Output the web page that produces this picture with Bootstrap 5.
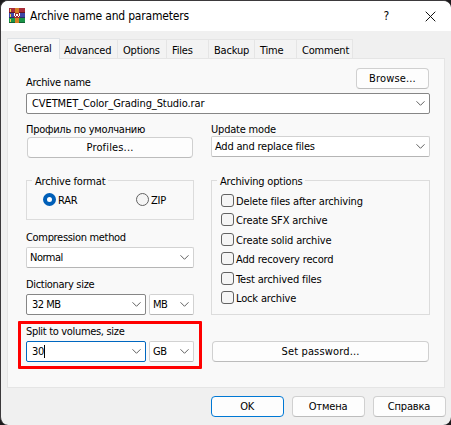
<!DOCTYPE html>
<html lang="en">
<head>
<meta charset="utf-8">
<meta name="viewport" content="width=device-width, initial-scale=1">
<title>Archive name and parameters</title>
<link href="https://cdn.jsdelivr.net/npm/bootstrap@5.3.0/dist/css/bootstrap.min.css" rel="stylesheet">
<style>
html,body{height:100%;overflow:hidden}
body{background:#1c1a1c;font:11px/15px "DejaVu Sans Condensed","DejaVu Sans",sans-serif;font-stretch:condensed;color:#000;letter-spacing:-.2px;white-space:nowrap}
.dialog-win{width:451px;height:425px;background:#f0f0f0;border:1px solid #3b393b;border-right:0;border-bottom:0;border-radius:8px;overflow:hidden}
.title-strip{height:30px;background:#fff;padding:0 15px 0 8px}
.title-strip .caption{font-size:12px;margin-left:5px;letter-spacing:-.2px}
.nav-tabs{--bs-nav-tabs-border-width:0;height:27px;padding:7px 0 0 6px;align-items:flex-end;border:0;flex-wrap:nowrap;position:relative;z-index:1}
.nav-tabs .nav-link{height:19px;padding:3px 0 0 5px;border:1px solid #e5e5e5;border-bottom:0;border-left:0;border-radius:0;background:#f3f3f3;color:#000;margin:0}
.nav-tabs .nav-link.w-adv{padding-left:4px}
.nav-tabs .nav-link.active{height:21px;padding:2px 0 0 6px;border-left:1px solid #e5e5e5;background:#f9f9f9;color:#000;margin-bottom:-1px}
.w-gen{width:53px}.w-adv{width:58px}.w-opt{width:49px}.w-fil{width:42px}.w-bak{width:46px}.w-tim{width:42px}.w-com{width:56px}
.pane{margin-left:6px;width:438px;height:330px;background:#f9f9f9;border:1px solid #e5e5e5;padding:9px 14px 0 18px}
.head-row{height:25px;padding:0 1px 0 0}
.head-row label{margin-top:7px;letter-spacing:-.3px}
.btn{--bs-btn-font-size:11px;--bs-btn-line-height:15px;height:21px;padding:0;background:#fdfdfd;border:1px solid #d0d0d0;border-bottom-color:#bcbcbc;border-radius:4px;color:#000;letter-spacing:.15px}
.btn.cyr{letter-spacing:-.15px;padding-right:1px}
.btn.main{border-color:#0078d4;letter-spacing:-.3px;padding-right:1px}
.w-std{width:73px}
.combo{height:21px;background:#fff;border:1px solid #d2d2d2;border-bottom-color:#b5b5b5;border-radius:2px;padding:0 4px 0 3px}
.combo.edit{border-color:#868686;padding-left:5px}
.combo.focus{border-color:#0067c0}
.chev{width:9px;height:5px;fill:none;stroke:#606060;stroke-width:1}
.file-name{letter-spacing:-.1px}
.tight{letter-spacing:-.5px}
.col-l{width:168px}.col-r{width:219px}
.size{width:120px}.unit{width:45px}
.group{border:1px solid #dcdcdc;position:relative}
.group>legend{position:absolute;top:-7px;left:5px;width:auto;margin:0;padding:0 3px;background:#f9f9f9;font-size:11px;line-height:15px;float:none}
.g-format{height:40px;margin-top:22px;padding:12px 0 0 16px}
.g-opts{height:135px;margin-top:23px;padding:13px 0 0 9px}
.form-check-input{width:13px;height:13px;margin:0;float:none;flex:none;border:1px solid #626262;background-color:#f5f5f5}
.form-check-input[type=checkbox]{border-radius:3px}
.form-check-input[type=radio]:checked{background:#fff;border:4px solid #005fb8}
.opt{height:19.4px}
.opt label{margin-left:2px}
.g-opts label{letter-spacing:-.15px}
.r-rar{width:93px}
.split-mark{margin:6px -8px 0;width:184px;height:48px;border:3px solid red;padding:0 5px;border-radius:1px}
.lbl{height:15px}
.lbl.slim{height:14px}
.lbl.tall{height:17px;letter-spacing:-.32px}
.lbl.cyr{letter-spacing:-.27px}
.gap-a{margin-top:10px}.gap-b{margin-top:9px}
.profile-btn{width:166px;margin:0 1px}
.set-pass{margin:26px 1px 0;width:217px}
.caret-bar{width:1px;height:13px;background:#000}
.foot{padding:8px 5px 0 0}
</style>
</head>
<body>
<main class="dialog-win">
  <header class="title-strip d-flex align-items-center">
    <svg width="16" height="16" viewBox="0 0 16 16" shape-rendering="crispEdges">
      <path fill="#a92b38" d="M0 0h16v5H0z"/><path fill="#3e48a8" d="M0 5h16v5H0z"/><path fill="#199447" d="M0 10h16v5H0z"/>
      <path fill="#631421" d="M0 4h16v1H0z"/><path fill="#282b68" d="M0 9h16v1H0z"/><path fill="#126032" d="M0 14h16v1H0z"/>
      <path fill="#ead04b" d="M1 1h1v3H1zM1 6h1v3H1zM1 11h1v3H1z"/>
      <path fill="#d68025" d="M6 0h4v15H6z"/><path fill="#9c2c34" d="M5 5h6v5H5z"/><path fill="#fff" d="M5 5h1v3H5zM10 5h1v3h-1zM6 8h1v1H6zM9 8h1v1H9zM7 6h2v2H7z"/>
    </svg>
    <span class="caption">Archive name and parameters</span>
    <span class="caption ms-auto me-4 pe-1">?</span>
    <svg class="ms-2" width="11" height="11" viewBox="0 0 11 11"><path d="M.7.7l9.6 9.6M10.300.7L.7 10.300" stroke="#111" fill="none"/></svg>
  </header>
  <nav class="nav nav-tabs">
    <a class="nav-link active w-gen">General</a><a class="nav-link w-adv">Advanced</a><a class="nav-link w-opt">Options</a><a class="nav-link w-fil">Files</a><a class="nav-link w-bak">Backup</a><a class="nav-link w-tim">Time</a><a class="nav-link w-com">Comment</a>
  </nav>
  <section class="pane">
    <div class="head-row d-flex justify-content-between">
      <label>Archive name</label>
      <button class="btn w-std">Browse...</button>
    </div>
    <div class="combo edit d-flex align-items-center justify-content-between"><span class="file-name">CVETMET_Color_Grading_Studio.rar</span><svg class="chev" viewBox="0 0 9 5"><path d="M.5.3l4 4 4-4"/></svg></div>
    <div class="d-flex justify-content-between pt-2">
      <div class="col-l">
        <div class="lbl cyr">Профиль по умолчанию</div>
        <button class="btn profile-btn">Profiles...</button>
        <fieldset class="group g-format d-flex">
          <legend>Archive format</legend>
          <div class="opt d-flex r-rar"><input class="form-check-input" type="radio" name="fmt" id="rar" checked><label for="rar">RAR</label></div>
          <div class="opt d-flex"><input class="form-check-input" type="radio" name="fmt" id="zip"><label for="zip">ZIP</label></div>
        </fieldset>
        <div class="lbl tall gap-a">Compression method</div>
        <div class="combo d-flex align-items-center justify-content-between"><span class="tight">Normal</span><svg class="chev" viewBox="0 0 9 5"><path d="M.5.3l4 4 4-4"/></svg></div>
        <div class="lbl tall gap-b">Dictionary size</div>
        <div class="d-flex justify-content-between">
          <div class="combo edit d-flex align-items-center justify-content-between size"><span class="tight">32 MB</span><svg class="chev" viewBox="0 0 9 5"><path d="M.5.3l4 4 4-4"/></svg></div>
          <div class="combo d-flex align-items-center justify-content-between unit"><span class="tight">MB</span><svg class="chev" viewBox="0 0 9 5"><path d="M.5.3l4 4 4-4"/></svg></div>
        </div>
        <div class="split-mark">
          <div class="lbl tall">Split to volumes, size</div>
          <div class="d-flex justify-content-between">
            <div class="combo edit focus d-flex align-items-center size"><span>30</span><i class="caret-bar"></i><svg class="chev ms-auto" viewBox="0 0 9 5"><path d="M.5.3l4 4 4-4"/></svg></div>
            <div class="combo d-flex align-items-center justify-content-between unit"><span class="tight">GB</span><svg class="chev" viewBox="0 0 9 5"><path d="M.5.3l4 4 4-4"/></svg></div>
          </div>
        </div>
      </div>
      <div class="col-r">
        <div class="lbl slim">Update mode</div>
        <div class="combo d-flex align-items-center justify-content-between"><span>Add and replace files</span><svg class="chev" viewBox="0 0 9 5"><path d="M.5.3l4 4 4-4"/></svg></div>
        <fieldset class="group g-opts">
          <legend>Archiving options</legend>
          <div class="opt d-flex"><input class="form-check-input" type="checkbox" id="o1"><label for="o1">Delete files after archiving</label></div>
          <div class="opt d-flex"><input class="form-check-input" type="checkbox" id="o2"><label for="o2">Create SFX archive</label></div>
          <div class="opt d-flex"><input class="form-check-input" type="checkbox" id="o3"><label for="o3">Create solid archive</label></div>
          <div class="opt d-flex"><input class="form-check-input" type="checkbox" id="o4"><label for="o4">Add recovery record</label></div>
          <div class="opt d-flex"><input class="form-check-input" type="checkbox" id="o5"><label for="o5">Test archived files</label></div>
          <div class="opt d-flex"><input class="form-check-input" type="checkbox" id="o6"><label for="o6">Lock archive</label></div>
        </fieldset>
        <button class="btn set-pass">Set password...</button>
      </div>
    </div>
  </section>
  <footer class="foot d-flex justify-content-end gap-2">
    <button class="btn main w-std">OK</button><button class="btn cyr w-std">Отмена</button><button class="btn cyr w-std">Справка</button>
  </footer>
</main>
<script src="https://cdn.jsdelivr.net/npm/bootstrap@5.3.0/dist/js/bootstrap.bundle.min.js"></script>
</body>
</html>
